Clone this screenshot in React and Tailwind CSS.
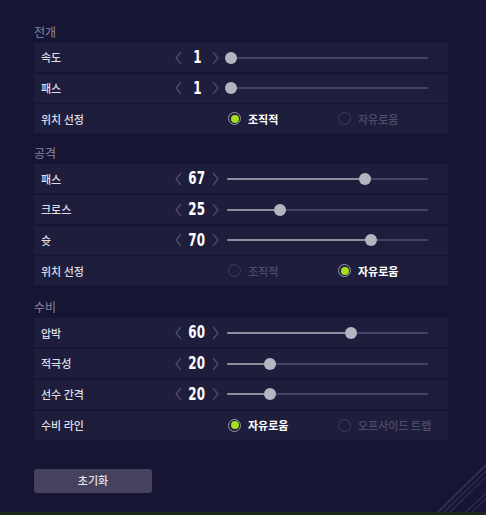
import React from 'react';

const KR = { fontFamily: '"Noto Sans CJK KR", "Noto Sans", sans-serif' };
const NUM = { fontFamily: '"DejaVu Sans Condensed", "DejaVu Sans", sans-serif' };

const sections = [
    {
        title: '전개',
        gap: 'pt-[21px]',
        rows: [
            { type: 'slider', label: '속도', value: 1 },
            { type: 'slider', label: '패스', value: 1 },
            { type: 'radio', label: '위치 선정', options: ['조직적', '자유로움'], selected: 0 },
        ],
    },
    {
        title: '공격',
        gap: 'pt-[9px]',
        rows: [
            { type: 'slider', label: '패스', value: 67 },
            { type: 'slider', label: '크로스', value: 25 },
            { type: 'slider', label: '슛', value: 70 },
            { type: 'radio', label: '위치 선정', options: ['조직적', '자유로움'], selected: 1 },
        ],
    },
    {
        title: '수비',
        gap: 'pt-[11px]',
        rows: [
            { type: 'slider', label: '압박', value: 60 },
            { type: 'slider', label: '적극성', value: 20 },
            { type: 'slider', label: '선수 간격', value: 20 },
            { type: 'radio', label: '수비 라인', options: ['자유로움', '오프사이드 트랩'], selected: 0 },
        ],
    },
];

const Chevron = ({ dir }) => (
    <svg width="7" height="14" viewBox="0 0 7 14" className="shrink-0">
        <path
            d={dir === 'left' ? 'M6 1 L1 7 L6 13' : 'M1 1 L6 7 L1 13'}
            fill="none"
            stroke="#4d4d6e"
            strokeWidth="1.2"
        />
    </svg>
);

const SliderControl = ({ value }) => (
    <div className="flex items-center h-full">
        <Chevron dir="left" />
        <div className="w-[30px] flex justify-center">
            <span className="inline-block scale-x-[0.78] text-white font-bold text-[17px] leading-none" style={NUM}>
                {value}
            </span>
        </div>
        <Chevron dir="right" />
        <div className="relative ml-[8px] w-[201px] h-[12px] flex items-center">
            <div className="w-full h-[2px] bg-[#43436a] rounded-full" />
            <div
                className="absolute left-0 h-[2px] bg-[#8d8d9c] rounded-full"
                style={{ width: `${2 + value * 2.03}px` }}
            />
            <div
                className="absolute w-[12px] h-[12px] rounded-full bg-[#b5b5c1]"
                style={{ left: `${value * 2.03 - 4}px` }}
            />
        </div>
    </div>
);

const RadioControl = ({ options, selected }) => (
    <div className="flex items-center h-full pl-[54px]">
        {options.map((opt, i) => {
            const on = i === selected;
            return (
                <div key={i} className="flex items-center w-[110px]">
                    {on ? (
                        <div className="w-[13px] h-[13px] rounded-full border-[1.5px] border-[#9a9aa6] flex items-center justify-center">
                            <div className="w-[8px] h-[8px] rounded-full bg-[#a6e01c]" />
                        </div>
                    ) : (
                        <div className="w-[13px] h-[13px] rounded-full border-[1.5px] border-[#3d3d5c]" />
                    )}
                    <span
                        className={`ml-[7px] text-[11px] ${on ? 'text-white font-bold' : 'text-[#4d4d6d] font-medium'}`}
                        style={KR}
                    >
                        {opt}
                    </span>
                </div>
            );
        })}
    </div>
);

const Row = ({ row }) => (
    <div className="flex items-center h-[29px] bg-[#1e1e3c]">
        <div className="w-[141px] pl-[7px] text-[11px] font-medium text-[#dedee8]" style={KR}>
            {row.label}
        </div>
        {row.type === 'slider' ? (
            <SliderControl value={row.value} />
        ) : (
            <RadioControl options={row.options} selected={row.selected} />
        )}
    </div>
);

export default function App() {
    return (
        <div className="relative w-[486px] h-[515px] bg-[#161634] overflow-hidden">
            <div className="pl-[34px] w-[448px]">
                {sections.map((s, i) => (
                    <div key={i} className={s.gap}>
                        <div className="h-[22px] flex items-center text-[12px] text-[#8686a0]" style={KR}>
                            {s.title}
                        </div>
                        <div className="flex flex-col gap-[1.7px]">
                            {s.rows.map((r, j) => (
                                <Row key={j} row={r} />
                            ))}
                        </div>
                    </div>
                ))}
                <button
                    className="mt-[29px] w-[118px] h-[24px] rounded-[3px] bg-[#46425e] text-[11px] font-medium text-[#e4e4ec] flex items-center justify-center"
                    style={KR}
                >
                    초기화
                </button>
            </div>

            <svg className="absolute right-0 bottom-[3px]" width="50" height="55" viewBox="0 0 50 55">
                <path d="M2 55 L50 8" stroke="#2e2e52" strokeWidth="2" />
                <path d="M8 55 L50 14" stroke="#2b2b4e" strokeWidth="1.5" />
                <path d="M14 55 L50 20" stroke="#29294a" strokeWidth="1.5" />
                <path d="M30 55 L50 36" stroke="#2b2b4e" strokeWidth="1.5" />
                <path d="M36 55 L50 42" stroke="#29294a" strokeWidth="1.5" />
            </svg>
            <div className="absolute left-0 right-0 bottom-0 h-[3px] bg-[#1a281c]" />
        </div>
    );
}
